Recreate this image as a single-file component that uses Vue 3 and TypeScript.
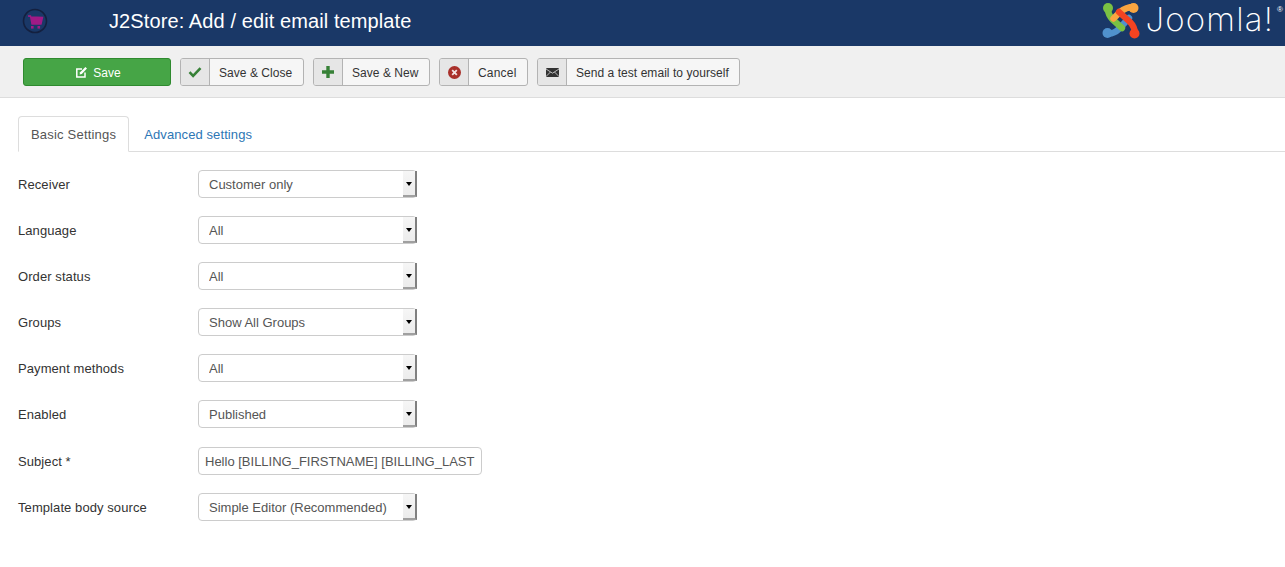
<template>
  <div class="page">
    <header class="topbar">
      <div class="brand">
        <svg class="cart-logo" width="26" height="26" viewBox="0 0 26 26">
          <circle cx="13" cy="13" r="11.500" fill="#1a3867" stroke="#14203f" stroke-width="1.600" />
          <path d="M6 8h2.500l1.500 8h9l1.500-6.500L8.800 9" fill="#a01a86" stroke="#a01a86" stroke-width="1.400" />
          <rect x="9" y="18" width="2.600" height="2.600" fill="#a01a86" />
          <rect x="15.500" y="18" width="2.600" height="2.600" fill="#a01a86" />
        </svg>
        <h1 class="title">J2Store: Add / edit email template</h1>
      </div>
      <div class="joomla">
        <svg width="38" height="38" viewBox="0 0 38 38" fill="none" stroke-linecap="round" stroke-width="6.400">
          <path d="M5.500 31.500Q12 32 17 27L27 16" stroke="#5091cd" />
          <circle cx="5.500" cy="31" r="5" fill="#5091cd" />
          <path d="M5.500 5.500Q6 13 11 18L20 26" stroke="#7ac143" />
          <circle cx="6" cy="6" r="5" fill="#7ac143" />
          <path d="M32 5Q24 5 18 10L11.500 16.500" stroke="#f9a541" />
          <circle cx="31.500" cy="6" r="5" fill="#f9a541" />
          <path d="M33 32Q33 25 28 20L17 10" stroke="#f44321" />
          <circle cx="32.500" cy="31.500" r="5" fill="#f44321" />
        </svg>
        <span class="joomla-word">Joomla!</span><sup class="reg">®</sup>
      </div>
    </header>

    <div class="toolbar">
      <button class="btn-save" type="button">
        <svg width="13" height="13" viewBox="0 0 13 13" fill="none" stroke="#fff">
          <path d="M10 6.500V11H1.800V3H7" stroke-width="1.500" />
          <path d="M4.600 8.400l.5-2.200L10.400 1l1.600 1.600-5.200 5.300z" fill="#fff" stroke="none" />
        </svg>
        Save
      </button>
      <button v-for="b in actions" :key="b.label" class="btn" :class="`btn--${b.icon}`" type="button">
        <span class="btn__icon">
          <svg v-if="b.icon === 'check'" width="14" height="12" viewBox="0 0 14 12">
            <path d="M1.500 6.200l3.600 3.600 7.400-7.600" fill="none" stroke="#378137" stroke-width="2.600" />
          </svg>
          <svg v-else-if="b.icon === 'plus'" width="12" height="12" viewBox="0 0 12 12">
            <path d="M6 0v12M0 6h12" stroke="#378137" stroke-width="3.400" />
          </svg>
          <svg v-else-if="b.icon === 'cancel'" width="13" height="13" viewBox="0 0 13 13">
            <circle cx="6.500" cy="6.500" r="6.500" fill="#a9302a" />
            <path d="M4.200 4.200l4.600 4.600M8.800 4.200l-4.600 4.600" stroke="#f3e3e2" stroke-width="1.800" />
          </svg>
          <svg v-else width="13" height="9" viewBox="0 0 13 9">
            <rect width="13" height="9" rx="1" fill="#333" />
            <path d="M0 1l6.500 4.200L13 1M0 8.500l4.500-4.500M13 8.500L8.500 4" fill="none" stroke="#ddd" stroke-width=".8" />
          </svg>
        </span>
        <span class="btn__text">{{ b.label }}</span>
      </button>
    </div>

    <main class="content">
      <ul class="tabs">
        <li class="tab tab--active">Basic Settings</li>
        <li class="tab">Advanced settings</li>
      </ul>

      <form class="form" @submit.prevent>
        <div v-for="f in fields" :key="f.label" class="row" :class="{ 'row--input': f.input }">
          <label class="row__label">{{ f.label }}</label>
          <input v-if="f.input" class="text-input" type="text" :value="f.value" />
          <div v-else class="select-wrap">
            <select class="select">
              <option>{{ f.value }}</option>
            </select>
            <span class="select-arrow"></span>
          </div>
        </div>
      </form>
    </main>
  </div>
</template>

<script setup lang="ts">
interface Field {
  label: string
  value: string
  input?: boolean
}

const actions = [
  { label: 'Save & Close', icon: 'check' },
  { label: 'Save & New', icon: 'plus' },
  { label: 'Cancel', icon: 'cancel' },
  { label: 'Send a test email to yourself', icon: 'mail' },
]

const fields: Field[] = [
  { label: 'Receiver', value: 'Customer only' },
  { label: 'Language', value: 'All' },
  { label: 'Order status', value: 'All' },
  { label: 'Groups', value: 'Show All Groups' },
  { label: 'Payment methods', value: 'All' },
  { label: 'Enabled', value: 'Published' },
  { label: 'Subject *', value: 'Hello [BILLING_FIRSTNAME] [BILLING_LASTNAME]', input: true },
  { label: 'Template body source', value: 'Simple Editor (Recommended)' },
]
</script>

<style>
html, body { background: #fff; overflow: hidden; }
</style>

<style scoped>
.page { font-family: "Liberation Sans", Arial, sans-serif; font-size: 13px; color: #333; height: 567px; overflow: hidden; }
.topbar { height: 46px; background: #1a3867; display: flex; justify-content: space-between; align-items: center; padding: 0 2px 0 22px; }
.brand { display: flex; align-items: center; gap: 61px; margin-top: -4px; }
.cart-logo { display: block; }
.title { margin: 0; font-size: 20px; font-weight: 400; line-height: 30px; color: #fff; letter-spacing: .1px; }
.joomla { display: flex; align-items: flex-start; color: #fff; margin-top: -4px; height: 38px; }
.joomla-word { font-family: Inter, sans-serif; font-weight: 200; font-size: 33px; line-height: 34px; margin-left: 5px; letter-spacing: 1.200px; }
.reg { font-size: 8px; line-height: 10px; margin: 3px 0 0 3px; vertical-align: baseline; }

.toolbar { height: 52px; box-sizing: border-box; background: #f0f0f0; border-bottom: 1px solid #ddd; padding: 12px 0 0 23px; display: flex; align-items: flex-start; gap: 9px; }
.btn-save { width: 148px; height: 28px; background: #46a546; border: 1px solid #2f8a2f; border-radius: 3px; color: #fff; font: inherit; font-size: 12px; display: flex; align-items: center; justify-content: center; gap: 5px; padding: 1px 0 0 2px; }
.btn { height: 28px; box-sizing: border-box; display: flex; align-items: stretch; padding: 0; background: #f6f6f6; border: 1px solid #b3b3b3; border-radius: 3px; font: inherit; font-size: 12px; color: #333; letter-spacing: .05px; }
.btn--check { width: 124px; }
.btn--plus { width: 117px; }
.btn--cancel { width: 89px; letter-spacing: .2px; }
.btn--mail { width: 203px; }
.btn__icon { width: 29px; flex: none; box-sizing: border-box; background: #e6e6e6; border-right: 1px solid #b3b3b3; border-radius: 2px 0 0 2px; display: flex; align-items: center; justify-content: center; }
.btn__text { padding: 0 0 0 9px; line-height: 28px; white-space: nowrap; }

.content { padding: 18px 0 0 18px; }
.tabs { list-style: none; margin: 0; padding: 0; height: 36px; box-sizing: border-box; display: flex; border-bottom: 1px solid #ddd; }
.tab { height: 35px; box-sizing: border-box; padding: 0 14px; line-height: 36px; color: #2d76b5; border: 1px solid transparent; letter-spacing: .1px; }
.tab--active { color: #555; background: #fff; border-color: #ddd; border-bottom-color: #fff; border-radius: 4px 4px 0 0; padding: 0 12px; letter-spacing: .2px; height: 36px; }

.form { display: flex; flex-direction: column; gap: 18px; padding-top: 18px; }
.row { display: flex; align-items: center; height: 28px; }
.row--input { margin-top: 1px; }
.row__label { width: 180px; flex: none; letter-spacing: .08px; }
.select-wrap { position: relative; width: 219px; height: 28px; }
.select { appearance: none; width: 100%; height: 28px; box-sizing: border-box; border: 1px solid #ccc; border-radius: 4px; background: #fff; color: #555; font: inherit; padding: 0 0 0 10px; display: block; }
.select-arrow { position: absolute; top: 1px; right: 0; width: 14px; height: 26px; background: linear-gradient(#f6f6f6, #ececec); border-right: 2px solid #808080; border-bottom: 2px solid #a0a0a0; box-sizing: border-box; pointer-events: none; }
.select-arrow::after { content: ""; position: absolute; left: 3px; top: 11px; border: 3.500px solid transparent; border-top: 4px solid #000; border-bottom: 0; }
.text-input { width: 284px; height: 28px; box-sizing: border-box; border: 1px solid #ccc; border-radius: 4px; color: #555; font: inherit; padding: 0 6px; outline: none; }
</style>
